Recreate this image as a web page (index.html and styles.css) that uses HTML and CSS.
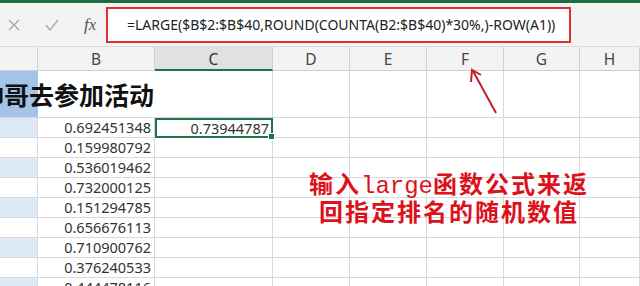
FILE: index.html
```html
<!DOCTYPE html>
<html lang="zh-CN">
<head>
  <meta charset="UTF-8">
  <meta name="viewport" content="width=device-width, initial-scale=1.0">
  <title>LARGE 函数</title>
  <link rel="stylesheet" href="styles.css">
</head>
<body>
  <div class="app">
    <div class="ribbon-edge"></div>

    <!-- 编辑栏 -->
    <div class="formula-bar">
      <div class="fb-icons">
        <svg class="fb-icon" width="14" height="14" viewBox="0 0 14 14">
          <path d="M2 2 L12 12 M12 2 L2 12" stroke="#a9a9a9" stroke-width="1.4" fill="none"/>
        </svg>
        <svg class="fb-icon" width="16" height="14" viewBox="0 0 16 14">
          <path d="M2 7 L6 12 L14 2" stroke="#a9a9a9" stroke-width="1.4" fill="none"/>
        </svg>
        <span class="fx">fx</span>
      </div>
      <div class="fb-input">=LARGE($B$2:$B$40,ROUND(COUNTA(B2:$B$40)*30%,)-ROW(A1))</div>
    </div>

    <!-- 工作表 -->
    <div class="sheet">
      <div class="col-head">&nbsp;</div>
      <div class="col-head">B</div>
      <div class="col-head col-head--active">C</div>
      <div class="col-head">D</div>
      <div class="col-head">E</div>
      <div class="col-head">F</div>
      <div class="col-head">G</div>
      <div class="col-head">H</div>

      <div class="cell title-cell"><span>帅哥去参加活动</span></div>
      <div class="cell"></div><div class="cell"></div><div class="cell"></div>
      <div class="cell"></div><div class="cell"></div><div class="cell"></div>

      <div class="cell col-a band"></div><div class="cell num">0.692451348</div><div class="cell num selected">0.73944787<i class="fill-handle"></i></div><div class="cell"></div><div class="cell"></div><div class="cell"></div><div class="cell"></div><div class="cell"></div>
      <div class="cell col-a"></div><div class="cell num">0.159980792</div><div class="cell"></div><div class="cell"></div><div class="cell"></div><div class="cell"></div><div class="cell"></div><div class="cell"></div>
      <div class="cell col-a band"></div><div class="cell num">0.536019462</div><div class="cell"></div><div class="cell"></div><div class="cell"></div><div class="cell"></div><div class="cell"></div><div class="cell"></div>
      <div class="cell col-a"></div><div class="cell num">0.732000125</div><div class="cell"></div><div class="cell"></div><div class="cell"></div><div class="cell"></div><div class="cell"></div><div class="cell"></div>
      <div class="cell col-a band"></div><div class="cell num">0.151294785</div><div class="cell"></div><div class="cell"></div><div class="cell"></div><div class="cell"></div><div class="cell"></div><div class="cell"></div>
      <div class="cell col-a"></div><div class="cell num">0.656676113</div><div class="cell"></div><div class="cell"></div><div class="cell"></div><div class="cell"></div><div class="cell"></div><div class="cell"></div>
      <div class="cell col-a band"></div><div class="cell num">0.710900762</div><div class="cell"></div><div class="cell"></div><div class="cell"></div><div class="cell"></div><div class="cell"></div><div class="cell"></div>
      <div class="cell col-a"></div><div class="cell num">0.376240533</div><div class="cell"></div><div class="cell"></div><div class="cell"></div><div class="cell"></div><div class="cell"></div><div class="cell"></div>
      <div class="cell col-a band"></div><div class="cell num">0.444478116</div><div class="cell"></div><div class="cell"></div><div class="cell"></div><div class="cell"></div><div class="cell"></div><div class="cell"></div>

      <!-- 标注 -->
      <svg class="arrow" width="40" height="50" viewBox="0 0 40 50">
        <path d="M31 46 L8 4" stroke="#c4202c" stroke-width="2" fill="none"/>
        <path d="M6 15 L7 3 L16 8" stroke="#c4202c" stroke-width="2" fill="none"/>
      </svg>
      <div class="note">输入<span class="latin">large</span>函数公式来返<br>回指定排名的随机数值</div>
    </div>
  </div>
</body>
</html>
```

FILE: styles.css
```css
body {
  margin: 0;
  background: #fff;
  font-family: "Noto Sans", "Noto Sans CJK SC", sans-serif;
}

.app {
  width: 640px;
  height: 286px;
  overflow: hidden;
}

.ribbon-edge {
  height: 3px;
  background: #1f6b42;
}

/* 编辑栏 */
.formula-bar {
  display: flex;
  align-items: center;
  height: 43px;
  background: #f3f3f3;
  border-bottom: 1px solid #dadada;
}

.fb-icons {
  display: flex;
  align-items: center;
  width: 106px;
  padding-left: 6px;
  box-sizing: border-box;
}

.fb-icon:first-child {
  margin-left: 1px;
}

.fb-icon + .fb-icon {
  margin-left: 23px;
}

.fx {
  margin-left: 24px;
  font-family: "Liberation Serif", serif;
  font-style: italic;
  font-size: 17px;
  color: #555;
}

.fb-input {
  width: 465px;
  height: 36px;
  margin-top: 1px;
  padding-left: 19px;
  box-sizing: border-box;
  background: #fff;
  border: 2px solid #e03131;
  font-size: 14px;
  line-height: 32px;
  color: #222;
  white-space: nowrap;
}

/* 工作表 */
.sheet {
  position: relative;
  display: grid;
  grid-template-columns: 38px 117px 118px 77px 77px 77px 76px 60px;
  grid-template-rows: 24px 47px repeat(9, 20px);
}

.col-head {
  background: #f3f3f3;
  border-right: 1px solid #d0d0d0;
  border-bottom: 1px solid #d0d0d0;
  text-align: center;
  font-size: 15.5px;
  line-height: 24px;
  color: #444;
}

.col-head--active {
  background: #e1e1e1;
  border-bottom: 2px solid #217346;
  color: #333;
}

.cell {
  border-right: 1px solid #d9d9d9;
  border-bottom: 1px solid #d9d9d9;
  box-sizing: border-box;
}

.col-a {
  background: #fff;
}

.col-a.band {
  background: #dde9f6;
}

.title-cell {
  grid-column: 1 / 3;
  display: flex;
  justify-content: flex-end;
  align-items: center;
  overflow: hidden;
  background: linear-gradient(to right, #a3c4e8 38px, #fff 38px);
  border-right: none;
}

.title-cell span {
  flex: none;
  font-family: "Noto Sans CJK SC", sans-serif;
  font-weight: bold;
  font-size: 25px;
  color: #111;
  white-space: nowrap;
  margin-right: 1px;
}

.num {
  text-align: right;
  padding-right: 3px;
  font-size: 14.5px;
  line-height: 19px;
  color: #333;
}

.selected {
  position: relative;
  border: 2px solid #217346;
  padding-right: 2px;
  line-height: 16px;
}

.fill-handle {
  position: absolute;
  right: -4px;
  bottom: -4px;
  width: 5px;
  height: 5px;
  background: #217346;
  border: 1px solid #fff;
}

/* 标注 */
.arrow {
  position: absolute;
  left: 465px;
  top: 20px;
}

.note {
  position: absolute;
  left: 288px;
  top: 125px;
  width: 322px;
  text-align: center;
  font-family: "Liberation Serif", "Noto Sans CJK SC", serif;
  font-weight: bold;
  font-size: 24px;
  line-height: 26px;
  letter-spacing: 2px;
  color: #dc111b;
}

.note .latin {
  font-family: "Liberation Mono", monospace;
  font-weight: normal;
  letter-spacing: 0;
}
```
